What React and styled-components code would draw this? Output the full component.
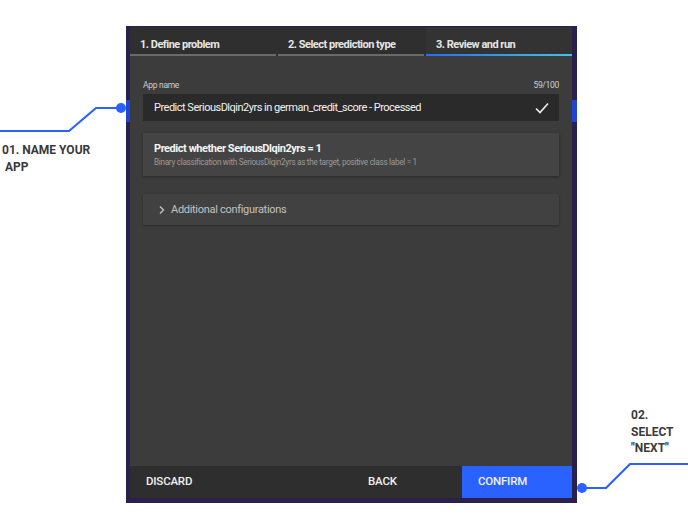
import styled, { createGlobalStyle } from 'styled-components';

const GlobalStyle = createGlobalStyle`
  html, body {
    margin: 0;
    padding: 0;
    background: #ffffff;
  }
  body {
    font-family: Roboto, "Noto Sans", sans-serif;
  }
`;

const Stage = styled.div`
  position: relative;
  width: 688px;
  height: 516px;
  overflow: hidden;
  background: #fff;
  padding: 26px 0 0 126px;
  box-sizing: border-box;
`;

const Frame = styled.div`
  position: relative;
  width: 451px;
  height: 477px;
  background: #2b1f4b;
`;

const PageBehind = styled.div`
  display: flex;
  flex-direction: column;
  padding-top: 74px;
`;

const BlueBand = styled.div`
  height: 22px;
  background: #1f45d6;
`;

const Modal = styled.div`
  position: absolute;
  top: 1px;
  left: 4px;
  width: 442px;
  height: 471px;
  display: flex;
  flex-direction: column;
  background: #3c3c3c;
`;

const Tabs = styled.div`
  display: grid;
  grid-template-columns: repeat(3, 1fr);
  column-gap: 2px;
  background: #2f2f2f;
`;

const Tab = styled.div`
  height: 29px;
  box-sizing: border-box;
  padding: 0 0 3px 10px;
  display: flex;
  align-items: flex-end;
  font-size: 11px;
  font-weight: 700;
  letter-spacing: -0.5px;
  color: #e6e6e6;
  background: ${(p) => (p.$active ? '#333333' : '#2f2f2f')};
  border-bottom: 2px solid #6a6a6a;
  border-image: ${(p) =>
    p.$active ? 'linear-gradient(90deg, #2a6cf0, #3ec6e8) 1' : 'none'};
`;

const Body = styled.div`
  flex: 1;
  padding: 24px 13px 0 13px;
  display: flex;
  flex-direction: column;
`;

const LabelRow = styled.div`
  display: flex;
  justify-content: space-between;
  font-size: 8.5px;
  letter-spacing: -0.3px;
  color: #cfcfcf;
  margin-bottom: 4px;
`;

const Input = styled.div`
  height: 27px;
  background: #2a2a2a;
  display: flex;
  align-items: center;
  justify-content: space-between;
  padding: 0 10px 0 11px;
  font-size: 11px;
  letter-spacing: -0.5px;
  color: #f2f2f2;
`;

const Card = styled.div`
  margin-top: 12px;
  height: 43px;
  background: #444444;
  box-shadow: 0 1px 3px rgba(0, 0, 0, 0.35);
  padding: 0 11px;
  display: flex;
  flex-direction: column;
  justify-content: center;
  gap: 2px;
`;

const CardTitle = styled.div`
  font-size: 11px;
  font-weight: 700;
  letter-spacing: -0.45px;
  color: #f4f4f4;
`;

const CardSub = styled.div`
  font-size: 8.2px;
  letter-spacing: -0.3px;
  color: #9a9a9a;
`;

const Collapse = styled.div`
  margin-top: 18px;
  height: 31px;
  background: #414141;
  box-shadow: 0 1px 2px rgba(0, 0, 0, 0.3);
  display: flex;
  align-items: center;
  gap: 5px;
  padding-left: 15px;
  font-size: 11px;
  letter-spacing: -0.3px;
  color: #c2c2c2;
`;

const Footer = styled.div`
  height: 32px;
  display: grid;
  grid-template-columns: 222px 110px 110px;
  background: #2e2e2e;
`;

const FooterButton = styled.div`
  display: flex;
  align-items: center;
  padding: 0 0 3px 16px;
  font-size: 11.5px;
  font-weight: 500;
  letter-spacing: -0.2px;
  color: #f2f2f2;
  background: ${(p) => (p.$primary ? '#2962ff' : 'transparent')};
`;

const Note = styled.div`
  position: absolute;
  font-family: Roboto, "Noto Sans", sans-serif;
  font-weight: 700;
  font-size: 12px;
  line-height: 16.5px;
  letter-spacing: 0;
  color: #3a3a3a;
  white-space: pre;
  left: ${(p) => p.$x}px;
  top: ${(p) => p.$y}px;
`;

const Lines = styled.svg`
  position: absolute;
  left: 0;
  top: 0;
  pointer-events: none;
`;

const Check = () => (
  <svg width="14" height="12" viewBox="0 0 14 12">
    <polyline points="1,6.5 5,10.5 13,1.5" fill="none" stroke="#f0f0f0" strokeWidth="1.6" />
  </svg>
);

const Chevron = () => (
  <svg width="8" height="10" viewBox="0 0 8 10">
    <polyline points="2,1.5 5.5,5 2,8.5" fill="none" stroke="#c2c2c2" strokeWidth="1.4" />
  </svg>
);

const App = () => {
  return (
    <>
      <GlobalStyle />
      <Stage>
        <Frame>
          <PageBehind>
            <BlueBand />
          </PageBehind>
          <Modal>
            <Tabs>
              <Tab>1. Define problem</Tab>
              <Tab>2. Select prediction type</Tab>
              <Tab $active>3. Review and run</Tab>
            </Tabs>
            <Body>
              <LabelRow>
                <span>App name</span>
                <span>59/100</span>
              </LabelRow>
              <Input>
                <span>Predict SeriousDlqin2yrs in german_credit_score - Processed</span>
                <Check />
              </Input>
              <Card>
                <CardTitle>Predict whether SeriousDlqin2yrs = 1</CardTitle>
                <CardSub>Binary classification with SeriousDlqin2yrs as the target, positive class label = 1</CardSub>
              </Card>
              <Collapse>
                <Chevron />
                <span>Additional configurations</span>
              </Collapse>
            </Body>
            <Footer>
              <FooterButton>DISCARD</FooterButton>
              <FooterButton>BACK</FooterButton>
              <FooterButton $primary>CONFIRM</FooterButton>
            </Footer>
          </Modal>
        </Frame>
        <Lines width="688" height="516">
          <polyline points="0,131 69,131 96,108 121,108" fill="none" stroke="#2962ff" strokeWidth="2.2" />
          <circle cx="121" cy="108" r="5" fill="#2962ff" />
          <polyline points="582,488 606,488 630,464 688,464" fill="none" stroke="#2962ff" strokeWidth="2.2" />
          <circle cx="582" cy="488" r="5" fill="#2962ff" />
        </Lines>
        <Note $x={2} $y={142}>{'01. NAME YOUR\n APP'}</Note>
        <Note $x={631} $y={407}>{'02.\nSELECT\n"NEXT"'}</Note>
      </Stage>
    </>
  );
};

export default App;
